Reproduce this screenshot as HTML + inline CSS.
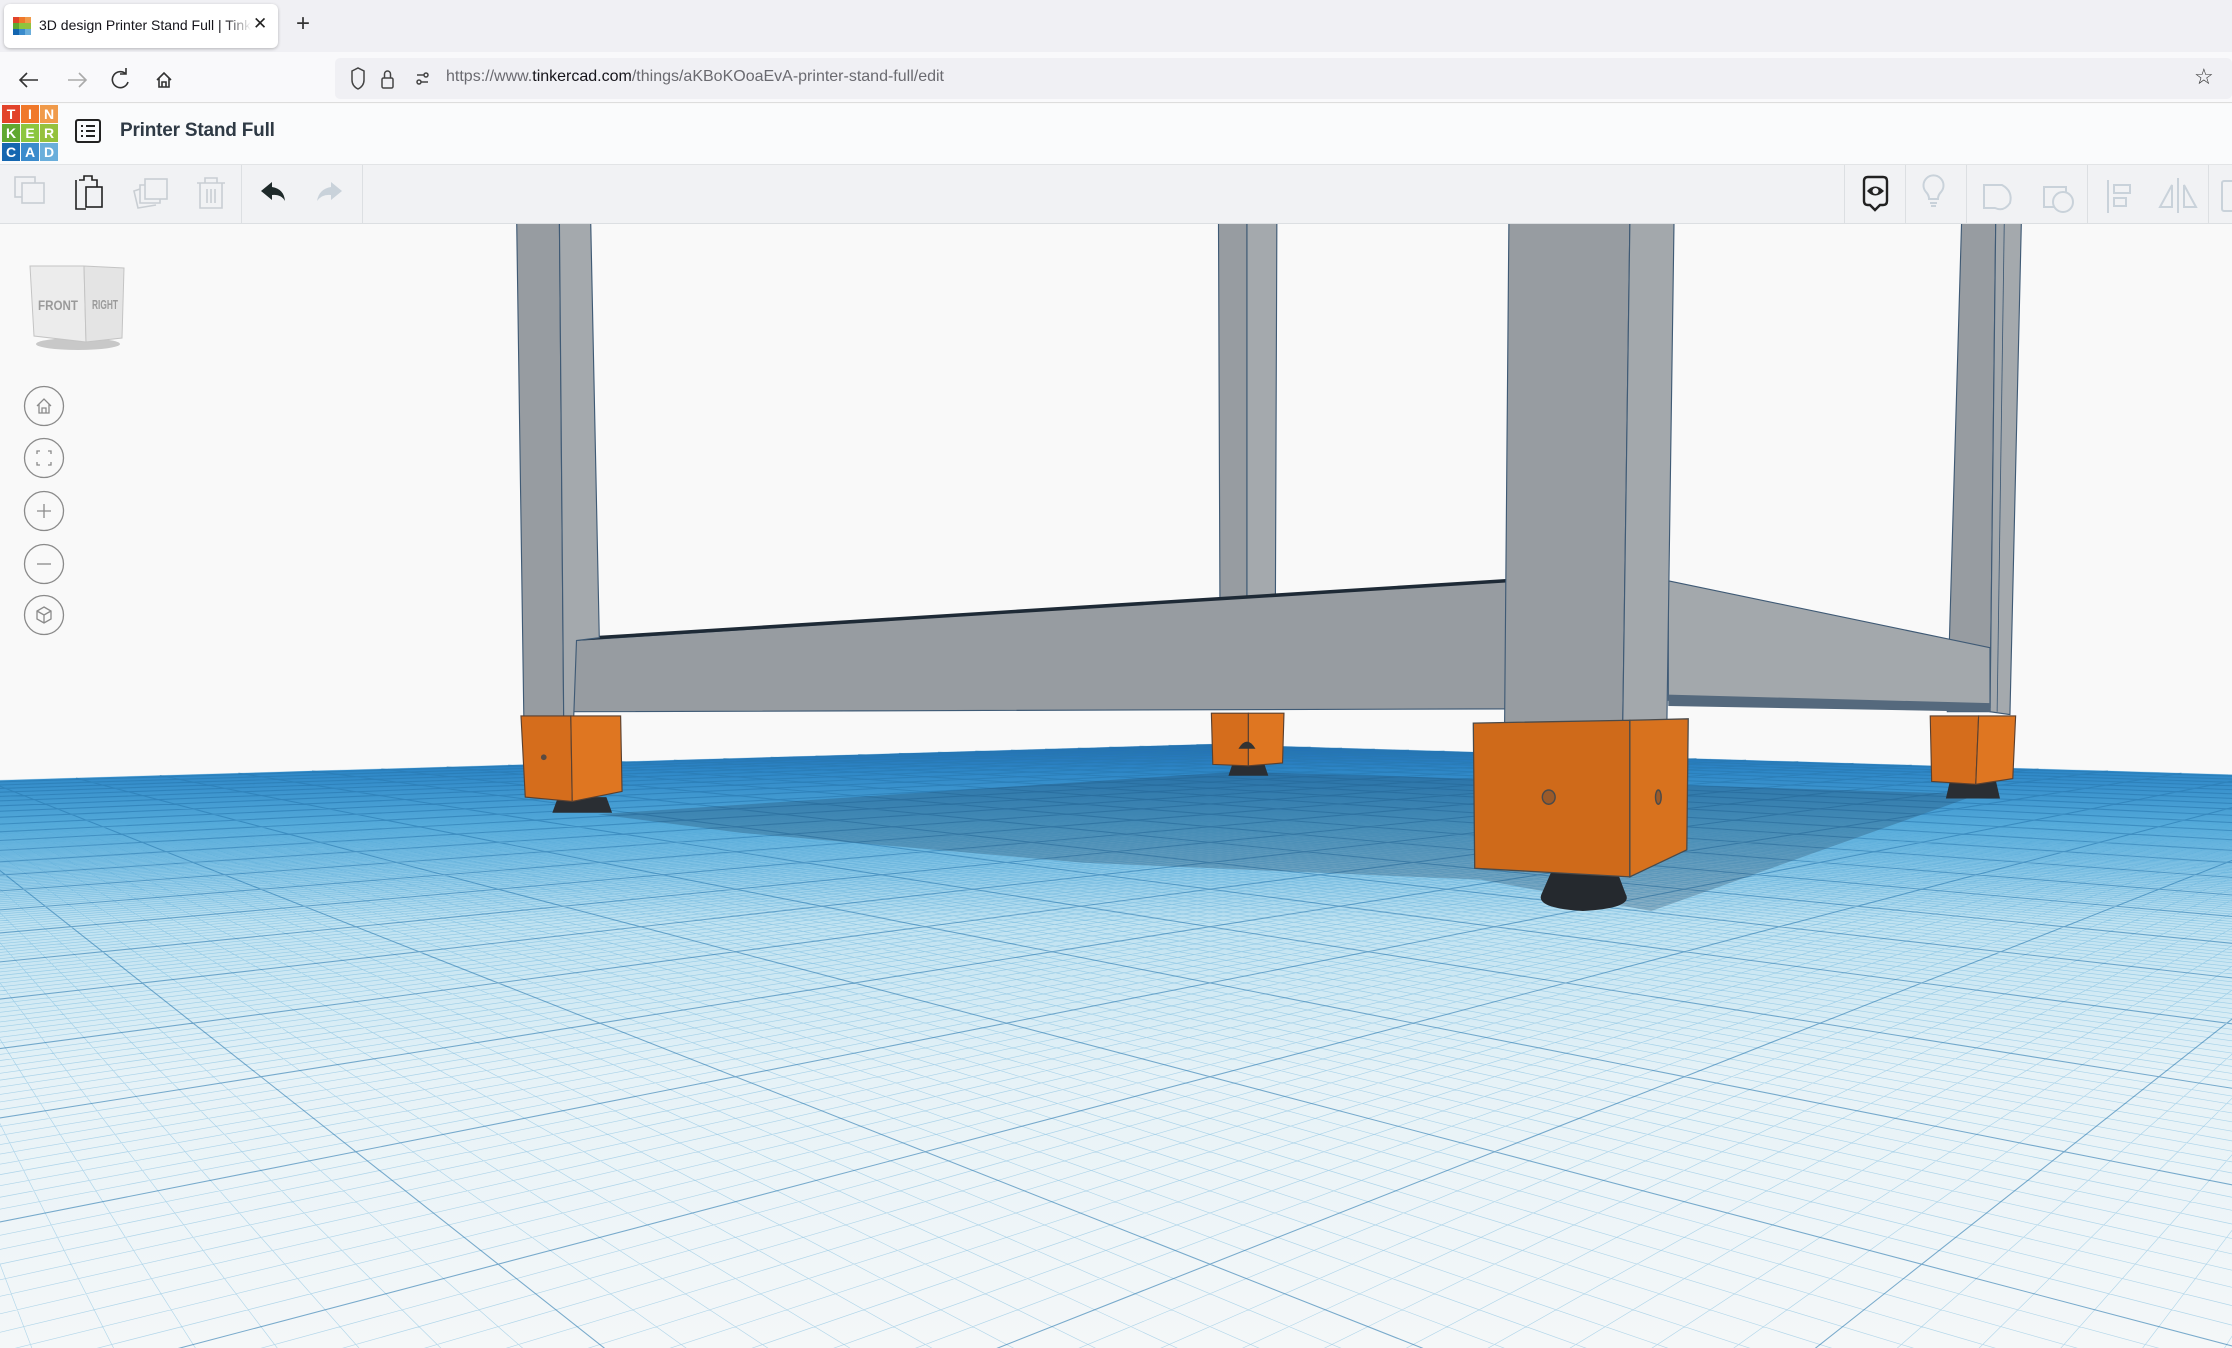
<!DOCTYPE html>
<html><head><meta charset="utf-8">
<style>
*{margin:0;padding:0;box-sizing:border-box}
html,body{width:2232px;height:1348px;overflow:hidden;background:#f9f9f9;font-family:"Liberation Sans",sans-serif;position:relative}
.abs{position:absolute}
#scene{position:absolute;left:0;top:0;width:2232px;height:1348px;display:block}
</style></head><body>
<svg id="scene" viewBox="0 0 1568 947" preserveAspectRatio="none">
<defs>
<linearGradient id="gg" gradientUnits="userSpaceOnUse" x1="0" y1="520" x2="0" y2="947">
<stop offset="0" stop-color="#08489a"/>
<stop offset="0.05" stop-color="#1f78c0"/>
<stop offset="0.14" stop-color="#5cb0de"/>
<stop offset="0.3" stop-color="#bfe2f1"/>
<stop offset="0.55" stop-color="#e6f2f7"/>
<stop offset="1" stop-color="#f4f7f8"/>
</linearGradient>
<clipPath id="vp"><rect x="0" y="157" width="1568" height="790"/></clipPath>
</defs>
<rect x="0" y="0" width="1568" height="947" fill="#f9f9f9"/>
<g clip-path="url(#vp)">
<path id="ground" fill="url(#gg)"/>
<g id="grid"></g>
</g>
<!-- shadow -->
<polygon points="420,572 870,542 1390,558 1160,640 1040,618 760,606 520,585" fill="rgba(30,60,90,0.28)"/>
<!-- mid back leg -->
<polygon points="856,157 876,157 876,420 857,420" fill="#979ca1" stroke="#3f5a75" stroke-width="0.8"/>
<polygon points="876,157 897,157 896,418 876,420" fill="#a4a9ad" stroke="#3f5a75" stroke-width="0.8"/>
<!-- right leg -->
<polygon points="1378,157 1402,157 1398,500 1368,500" fill="#979ca1" stroke="#3f5a75" stroke-width="0.8"/>
<polygon points="1402,157 1420,157 1412,502 1398,500" fill="#a4a9ad" stroke="#3f5a75" stroke-width="0.8"/>
<line x1="1408" y1="157" x2="1403" y2="500" stroke="#3f5a75" stroke-width="0.6"/>
<!-- right beam -->
<polygon points="1172,408 1398,455 1398,497 1172,492" fill="#a3a8ac" stroke="#3f5a75" stroke-width="0.8"/>
<polygon points="1172,488 1398,494 1398,500 1172,496" fill="#55697d"/>
<!-- front beam -->
<polygon points="403,450 1058,408 1058,498 403,500" fill="#979ca1" stroke="#3f5a75" stroke-width="0.8"/>
<line x1="403" y1="449" x2="1058" y2="408" stroke="#1e2a36" stroke-width="2.5"/>
<!-- left leg -->
<polygon points="363,157 393,157 396,505 368,505" fill="#979ca1" stroke="#3f5a75" stroke-width="0.8"/>
<polygon points="393,157 415,157 421,448 405,450 403,505 396,505" fill="#a4a9ad" stroke="#3f5a75" stroke-width="0.8"/>
<!-- front leg -->
<polygon points="1060,157 1145,157 1140,508 1057,508" fill="#979ca1" stroke="#3f5a75" stroke-width="0.8"/>
<polygon points="1145,157 1176,157 1171,508 1140,508" fill="#a3a8ac" stroke="#3f5a75" stroke-width="0.8"/>
<!-- feet: rubbers -->
<polygon points="392,560 426,560 430,571 388,571" fill="#2a2e33"/>
<polygon points="866,536 888,536 891,545 863,545" fill="#2a2e33"/>
<polygon points="1370,548 1402,548 1405,561 1367,561" fill="#2a2e33"/>
<path d="M1090,612 L1136,612 L1142,628 Q1148,638 1112,640 Q1078,638 1083,628 Z" fill="#25292e"/>
<!-- left foot -->
<polygon points="366,503 401,503 402,563 369,560" fill="#d56d1c" stroke="#5a4030" stroke-width="0.8"/>
<polygon points="401,503 436,503 437,556 402,563" fill="#df7621" stroke="#5a4030" stroke-width="0.8"/>
<circle cx="382" cy="532" r="2" fill="#5a4a40"/>
<!-- mid foot -->
<polygon points="851,501 877,501 877,538 852,537" fill="#d56d1c" stroke="#5a4030" stroke-width="0.8"/>
<polygon points="877,501 902,501 901,536 877,538" fill="#df7621" stroke="#5a4030" stroke-width="0.8"/>
<path d="M870,526 Q876,516 882,526 Z" fill="#333"/>
<!-- right foot -->
<polygon points="1356,503 1390,503 1388,551 1357,549" fill="#d56d1c" stroke="#5a4030" stroke-width="0.8"/>
<polygon points="1390,503 1416,503 1414,547 1388,551" fill="#df7621" stroke="#5a4030" stroke-width="0.8"/>
<!-- front foot -->
<polygon points="1035,508 1145,506 1145,616 1036,610" fill="#cf6a1a" stroke="#4a4a4a" stroke-width="0.9"/>
<polygon points="1145,506 1186,505 1185,597 1145,616" fill="#d8721e" stroke="#4a4a4a" stroke-width="0.9"/>
<ellipse cx="1088" cy="560" rx="4.5" ry="5" fill="#9a5a2a" stroke="#4a4a4a" stroke-width="1"/>
<ellipse cx="1165" cy="560" rx="2" ry="5" fill="#9a5a2a" stroke="#4a4a4a" stroke-width="1"/>
</svg>

<!-- tab strip -->
<div class="abs" style="left:0;top:0;width:2232px;height:52px;background:#f0f0f4"></div>
<div class="abs" style="left:4px;top:4px;width:274px;height:44px;background:#fff;border-radius:6px;box-shadow:0 1px 3px rgba(0,0,0,.25)"></div>
<div class="abs" style="left:13px;top:17px;width:18px;height:18px;display:grid;grid-template-columns:repeat(3,6px)">
<i style="background:#e2432a"></i><i style="background:#f0782a"></i><i style="background:#f09a4a"></i>
<i style="background:#60a830"></i><i style="background:#8cc63e"></i><i style="background:#95c13d"></i>
<i style="background:#1466b0"></i><i style="background:#3a8bcc"></i><i style="background:#6aaedb"></i></div>
<div class="abs" style="left:39px;top:17px;width:212px;overflow:hidden;white-space:nowrap;font-size:14px;color:#15141a;-webkit-mask-image:linear-gradient(90deg,#000 88%,transparent)">3D design Printer Stand Full | Tinkercad</div>
<div class="abs" style="left:253px;top:14px;font-size:17px;color:#222">✕</div>
<div class="abs" style="left:296px;top:10px;font-size:24px;color:#333;font-weight:300">+</div>

<!-- nav bar -->
<div class="abs" style="left:0;top:52px;width:2232px;height:51px;background:#f9f9fb;border-bottom:1px solid #ddd"></div>
<svg class="abs" style="left:0;top:52px" width="340" height="51" fill="none" stroke="#333" stroke-width="1.6">
<path d="M38,28 H20 M27,21 L20,28 L27,35"/>
<path d="M68,28 H86 M79,21 L86,28 L79,35" stroke="#aaa"/>
<path d="M126,22 A8,8 0 1 0 128,30 M126,16 V22 H120"/>
<path d="M157,28 L164,21 L171,28 M159,26 V35 H169 V26 M162,35 V30 H166 V35"/>
</svg>
<div class="abs" style="left:335px;top:58px;width:1897px;height:41px;background:#f0f0f4;border-radius:5px"></div>
<svg class="abs" style="left:340px;top:58px" width="100" height="41" fill="none" stroke="#444" stroke-width="1.5">
<path d="M12,13 L18,10 L24,13 V22 Q24,28 18,31 Q12,28 12,22 Z"/>
<rect x="42" y="20" width="11" height="10" rx="1.5"/><path d="M44.5,20 V16 A3,3 0 0 1 50.5,16 V20"/>
<path d="M77,17 H88 M77,24 H88"/><circle cx="79" cy="24" r="2" fill="#f0f0f4"/><circle cx="86" cy="17" r="2" fill="#f0f0f4"/>
</svg>
<div class="abs" style="left:446px;top:68px;font-size:16px;color:#6a6a70;white-space:nowrap">https://www.<span style="color:#15141a">tinkercad.com</span>/things/aKBoKOoaEvA-printer-stand-full/edit</div>
<div class="abs" style="left:2194px;top:64px;font-size:22px;color:#333">☆</div>

<!-- app header -->
<div class="abs" style="left:0;top:104px;width:2232px;height:61px;background:#fafbfc;border-bottom:1px solid #e2e4e6;box-shadow:0 1px 2px rgba(0,0,0,.06)"></div>
<div class="abs" style="left:2px;top:105px;width:56px;height:56px;display:grid;grid-template-columns:repeat(3,1fr);gap:1px;font-size:14px;color:#fff;text-align:center;line-height:18px;font-weight:bold">
<span style="background:#e2432a">T</span><span style="background:#f0782a">I</span><span style="background:#f09a4a">N</span>
<span style="background:#60a830">K</span><span style="background:#8cc63e">E</span><span style="background:#95c13d">R</span>
<span style="background:#1466b0">C</span><span style="background:#3a8bcc">A</span><span style="background:#6aaedb">D</span></div>
<svg class="abs" style="left:74px;top:118px" width="30" height="28" fill="none" stroke="#222" stroke-width="2">
<rect x="2" y="2" width="24" height="22" rx="2"/><path d="M7,8 H9 M12,8 H21 M7,13 H9 M12,13 H21 M7,18 H9 M12,18 H21"/></svg>
<div class="abs" style="left:120px;top:120px;font-size:19px;color:#2f3a45;font-weight:bold;letter-spacing:-0.2px">Printer Stand Full</div>

<!-- toolbar -->
<div class="abs" style="left:0;top:165px;width:2232px;height:59px;background:#f1f2f4;border-bottom:1px solid #dcdfe2"></div>
<div class="abs" style="left:241px;top:165px;width:1px;height:59px;background:#dcdfe2"></div>
<div class="abs" style="left:362px;top:165px;width:1px;height:59px;background:#dcdfe2"></div>
<svg class="abs" style="left:0;top:165px" width="370" height="59" fill="none" stroke-width="1.6">
<g stroke="#c9ced3"><rect x="15" y="12" width="20" height="20"/><rect x="22" y="18" width="22" height="20" fill="#f1f2f4"/></g>
<g stroke="#222"><path d="M79,15 H84 V11 H92 V15 H97 V22 M86,44 H76 V15"/><rect x="86" y="22" width="16" height="20"/></g>
<g stroke="#c9ced3"><rect x="145" y="14" width="22" height="20"/><path d="M145,20 H140 V38 H160 V34 M140,24 L134,26 L138,43 L156,40"/></g>
<g stroke="#c9ced3"><path d="M197,18 H225 M205,18 V13 H217 V18 M200,18 V43 H222 V18 M207,24 V38 M211,24 V38 M215,24 V38"/></g>
<path d="M272,17 L261,26 L272,35 V30 Q281,29 285,36 Q284,24 272,22 Z" fill="#1f2a2a" stroke="none"/>
<path d="M331,17 L342,26 L331,35 V30 Q322,29 317,36 Q319,24 331,22 Z" fill="#c9d2da" stroke="none"/>
</svg>
<div class="abs" style="left:1844px;top:165px;width:1px;height:59px;background:#dcdfe2"></div>
<div class="abs" style="left:1905px;top:165px;width:1px;height:59px;background:#dcdfe2"></div>
<div class="abs" style="left:1966px;top:165px;width:1px;height:59px;background:#dcdfe2"></div>
<div class="abs" style="left:2087px;top:165px;width:1px;height:59px;background:#dcdfe2"></div>
<div class="abs" style="left:2208px;top:165px;width:1px;height:59px;background:#dcdfe2"></div>
<svg class="abs" style="left:1850px;top:165px" width="382" height="59" fill="none" stroke-width="2">
<path d="M14,16 Q14,12 18,12 H33 Q37,12 37,16 V36 Q37,40 33,40 H30 L25,45 L20,40 H18 Q14,40 14,36 Z" stroke="#222" stroke-width="2.4"/>
<path d="M17,26 Q25,17 34,26 Q25,35 17,26 Z" fill="#222" stroke="none"/><circle cx="25.5" cy="26" r="3" fill="#f1f2f4"/>
<g stroke="#c9d2da"><path d="M79,34 Q79,30 76,27 A10,10 0 1 1 91,27 Q88,30 88,34 Z M80,38 H87 M81,41 H86"/>
<path d="M134,20 H152 Q163,26 160,38 Q154,47 145,43 H134 Z"/>
<rect x="194" y="22" width="22" height="20"/><circle cx="213" cy="37" r="10" fill="#f1f2f4"/>
<path d="M258,15 V48 M264,20 H280 V28 H264 Z M264,33 H276 V41 H264 Z"/>
<path d="M328,13 V48 M322,20 L310,42 H322 Z M334,20 L346,42 H334 Z"/>
<rect x="372" y="16" width="12" height="30" rx="2"/></g>
</svg>

<!-- view cube -->
<svg class="abs" style="left:26px;top:262px" width="104" height="96">
<ellipse cx="52" cy="82" rx="42" ry="6" fill="#c8c8c8"/>
<polygon points="4,4 58,4 60,80 8,74" fill="#ececec" stroke="#c4c4c4"/>
<polygon points="58,4 98,6 96,76 60,80" fill="#e4e4e4" stroke="#c4c4c4"/>
<text x="12" y="48" font-size="14" font-weight="bold" fill="#9a9a9a" font-family="Liberation Sans,sans-serif" textLength="40" lengthAdjust="spacingAndGlyphs">FRONT</text>
<text x="66" y="47" font-size="13" font-weight="bold" fill="#9a9a9a" font-family="Liberation Sans,sans-serif" textLength="26" lengthAdjust="spacingAndGlyphs">RIGHT</text>
</svg>
<!-- nav circles -->
<svg class="abs" style="left:22px;top:384px" width="46" height="256" fill="none" stroke="#8a8a8a" stroke-width="1.3">
<circle cx="22" cy="22" r="19.5"/><circle cx="22" cy="74" r="19.5"/><circle cx="22" cy="127" r="19.5"/><circle cx="22" cy="180" r="19.5"/><circle cx="22" cy="231" r="19.5"/>
<path d="M15,22 L22,15 L29,22 M17,20 V29 H27 V20 M20,29 V24 H24 V29"/>
<path d="M15,70 V67 H18 M26,67 H29 V70 M29,78 V81 H26 M18,81 H15 V78"/>
<path d="M15,127 H29 M22,120 V134"/>
<path d="M15,180 H29"/>
<path d="M22,223 L29,227 V235 L22,239 L15,235 V227 Z M15,227 L22,231 L29,227 M22,231 V239"/>
</svg>

<script>
(function(){
var S=Math.SQRT2;
function P(u,v){var xc=(u-v)/S,zc=(u+v)/S;return [850+1000*xc/zc,493+44700/zc];}
var g=document.getElementById('grid');
var M=1060,minor='',major='',step=4;
var n=Math.floor(M/step);
for(var k=-n;k<=n;k++){
 var c=k*step;
 var lo=Math.max(-M,-c+20);
 if(lo>=M) continue;
 var a=P(c,lo),b=P(c,M),a2=P(lo,c),b2=P(M,c);
 var s='M'+a[0].toFixed(1)+','+a[1].toFixed(1)+'L'+b[0].toFixed(1)+','+b[1].toFixed(1)+
       'M'+a2[0].toFixed(1)+','+a2[1].toFixed(1)+'L'+b2[0].toFixed(1)+','+b2[1].toFixed(1);
 if(k%10===0) major+=s; else minor+=s;
}
var ns='http://www.w3.org/2000/svg';
var p1=document.createElementNS(ns,'path');p1.setAttribute('d',minor);p1.setAttribute('stroke','rgba(70,160,210,0.38)');p1.setAttribute('stroke-width','0.45');p1.setAttribute('fill','none');
var p2=document.createElementNS(ns,'path');p2.setAttribute('d',major);p2.setAttribute('stroke','rgba(40,120,175,0.6)');p2.setAttribute('stroke-width','0.75');p2.setAttribute('fill','none');
g.appendChild(p1);g.appendChild(p2);
var pts=[];
for(var u=-980;u<=M;u+=20){pts.push(P(u,M));}
for(var v=M;v>=-980;v-=20){pts.push(P(M,v));}
var d='M'+pts.map(function(q){return q[0].toFixed(1)+','+q[1].toFixed(1)}).join('L')+'L6000,3000L-6000,3000Z';
document.getElementById('ground').setAttribute('d',d);
})();
</script>
</body></html>
